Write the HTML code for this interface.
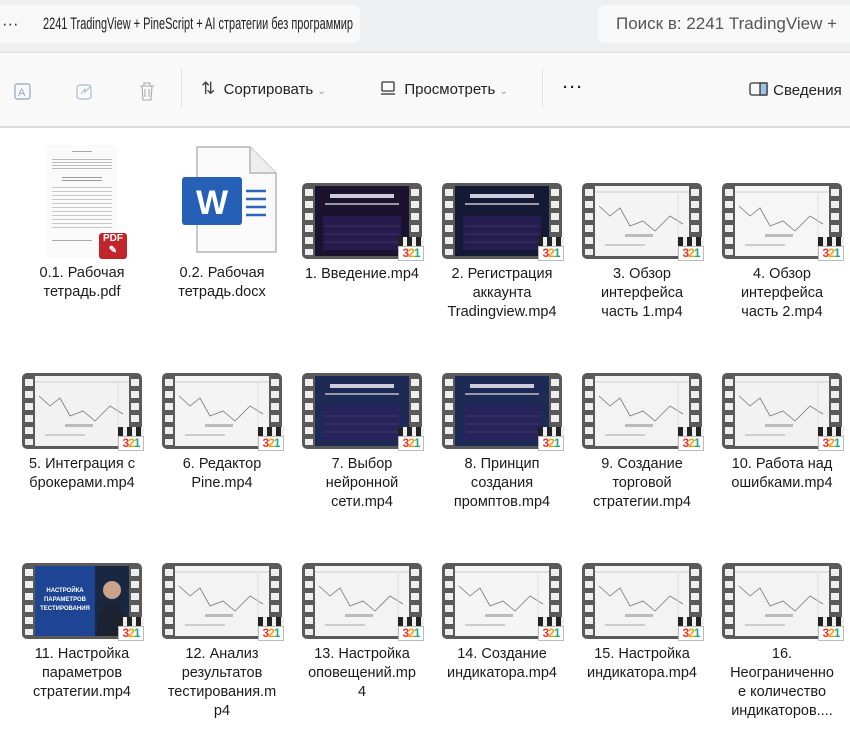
<!DOCTYPE html>
<html><head><meta charset="utf-8"><style>
body{margin:0;width:850px;height:732px;overflow:hidden;background:#fff;font-family:"Liberation Sans","DejaVu Sans",sans-serif;position:relative}
.top{position:absolute;left:0;top:0;width:850px;height:52px;background:#eeeff1;border-bottom:1px solid #e0e0e0}
.addr{position:absolute;left:-10px;top:5px;width:370px;height:38px;background:#f8f8f9;border-radius:6px;font-size:16.5px;color:#222;line-height:38px;white-space:nowrap;overflow:hidden}
.srch{position:absolute;left:598px;top:5px;width:270px;height:38px;background:#f8f8f9;border-radius:6px;font-size:17px;color:#555;line-height:38px;padding-left:18px;white-space:nowrap}
.tb{position:absolute;left:0;top:53px;width:850px;height:73px;background:#f9f9f9;border-bottom:2px solid #dcdcdc}
.tb span{position:absolute;top:28px;font-size:15px;color:#222;white-space:nowrap}
.sep{position:absolute;top:15px;width:1px;height:40px;background:#e3e3e3}
.it{position:absolute;width:140px;text-align:center}
.lab{font-size:14.5px;line-height:19px;color:#1a1a1a;margin-top:6px}
.film{position:relative;width:120px;height:76px;margin:0 auto;background:#5a5a5a;border-radius:5px}
.film .in{position:absolute;left:13px;top:3px;width:94px;height:70px;overflow:hidden}
.holes{position:absolute;top:6px;width:8px;height:66px;background:repeating-linear-gradient(#eee 0 7px,transparent 7px 12px)}
.badge{position:absolute;right:-2px;bottom:-2px;width:26px;height:24px}
.badge .c{position:absolute;left:0;top:0;width:26px;height:9px;background:repeating-linear-gradient(90deg,#222 0 5px,#eee 5px 9px)}
.badge .n{position:absolute;left:0;top:9px;width:26px;height:15px;background:#fff;border:1px solid #bbb;box-sizing:border-box;font:bold 12px/13px "Liberation Sans";letter-spacing:-1px;text-align:center}
.line{position:absolute;height:1px;background:#aaa}
.cond{position:absolute;left:53px;top:0;transform:scaleX(.665);transform-origin:left center}
</style></head><body>
<div class="top">
 <div class="addr"><span style="margin-left:12px;color:#333">···</span><span class="cond">2241 TradingView + PineScript + AI стратегии без программир</span></div>
 <div class="srch">Поиск в: 2241 TradingView +</div>
</div>
<div class="tb">
 <span style="left:12px">
  <svg width="22" height="20"><rect x="3" y="3" width="15" height="15" rx="2" fill="none" stroke="#8fa8c8" stroke-width="1.2"/><text x="6" y="15" font-size="11" fill="#8fa8c8">A</text></svg></span>
 <span style="left:74px"><svg width="22" height="20"><rect x="3" y="4" width="14" height="14" rx="3" fill="none" stroke="#a9bcd6" stroke-width="1.2"/><path d="M7 13 L11 8 L11 11 L16 6" stroke="#a9bcd6" fill="none"/></svg></span>
 <span style="left:136px"><svg width="22" height="20"><path d="M4 5 H18 M8 5 V2 H14 V5 M6 5 L7 19 H15 L16 5 M9 8 V16 M13 8 V16" stroke="#aaa" fill="none" stroke-width="1.1"/></svg></span>
 <div class="sep" style="left:181px"></div>
 <span style="left:201px;top:26px"><span style="position:static;font-size:17px;color:#444">⇅</span>&nbsp; Сортировать <span style="position:static;color:#999;font-size:10px">⌄</span></span>
 <span style="left:380px;top:28px"><svg width="16" height="14" style="vertical-align:-1px"><rect x="2" y="1" width="12" height="9" rx="1" fill="none" stroke="#333" stroke-width="1.3"/><path d="M1 13 H15" stroke="#333" stroke-width="1.3"/></svg>&nbsp; Просмотреть <span style="position:static;color:#999;font-size:10px">⌄</span></span>
 <div class="sep" style="left:542px"></div>
 <span style="left:563px;font-weight:bold;letter-spacing:2px;top:26px">···</span>
 <span style="left:749px"><svg width="20" height="16" style="vertical-align:-2px"><rect x="1" y="2" width="17" height="12" rx="2" fill="none" stroke="#333" stroke-width="1.3"/><rect x="11" y="2" width="7" height="12" fill="#9cc3e8" stroke="#333" stroke-width="1.3"/></svg>&nbsp;Сведения</span>
</div>

<div class="it" style="left:12px;top:145px">
 <div style="position:relative;width:70px;height:113px;margin:0 auto;background:#fafafa">
  <div class="line" style="left:25px;top:6px;width:20px"></div>
  <div class="line" style="left:5px;top:14px;width:60px;height:10px;background:repeating-linear-gradient(#bbb 0 1px,transparent 1px 3px)"></div>
  <div class="line" style="left:15px;top:32px;width:40px;height:6px;background:repeating-linear-gradient(#999 0 1px,transparent 1px 3px)"></div>
  <div class="line" style="left:5px;top:42px;width:60px;height:42px;background:repeating-linear-gradient(#c8c8c8 0 1px,transparent 1px 4px)"></div>
  <div class="line" style="left:5px;top:95px;width:40px"></div>
  <div style="position:absolute;left:52px;top:88px;width:28px;height:26px;background:#c0252a;border-radius:3px;color:#fff;font:bold 10px/12px 'Liberation Sans';text-align:center">PDF<br>✎</div>
 </div>
 <div class="lab">0.1. Рабочая<br>тетрадь.pdf</div>
</div>
<div class="it" style="left:152px;top:145px">
 <div style="position:relative;width:113px;height:113px;margin:0 auto">
  <svg width="113" height="113"><path d="M31 2 H84 L110 28 V107 H31 Z" fill="#fafafa" stroke="#b5b5b5" stroke-width="1.5"/><path d="M84 2 V28 H110" fill="#eee" stroke="#b5b5b5" stroke-width="1.5"/><path d="M80 46 H100 M80 54 H100 M80 62 H100 M80 70 H100" stroke="#2b66b8" stroke-width="2.5"/><rect x="16" y="32" width="60" height="48" rx="3" fill="#2660b6"/><text x="46" y="69" font-size="34" font-weight="bold" fill="#fff" text-anchor="middle" font-family="Liberation Sans">W</text></svg>
 </div>
 <div class="lab">0.2. Рабочая<br>тетрадь.docx</div>
</div>

<div id="vids"></div>
<script>
const V=[
[292,183,'#1b1230','1. Введение.mp4','d'],
[432,183,'#141a35','2. Регистрация<br>аккаунта<br>Tradingview.mp4','d'],
[572,183,'#f4f4f4','3. Обзор<br>интерфейса<br>часть 1.mp4','w'],
[712,183,'#f6f6f6','4. Обзор<br>интерфейса<br>часть 2.mp4','w'],
[12,373,'#f2f2f2','5. Интеграция с<br>брокерами.mp4','w'],
[152,373,'#f4f4f4','6. Редактор<br>Pine.mp4','w'],
[292,373,'#1d2a55','7. Выбор<br>нейронной<br>сети.mp4','d'],
[432,373,'#1c2a55','8. Принцип<br>создания<br>промптов.mp4','d'],
[572,373,'#f3f3f3','9. Создание<br>торговой<br>стратегии.mp4','w'],
[712,373,'#f2f2f2','10. Работа над<br>ошибками.mp4','w'],
[12,563,'#1e4494','11. Настройка<br>параметров<br>стратегии.mp4','p'],
[152,563,'#f3f3f3','12. Анализ<br>результатов<br>тестирования.m<br>p4','w'],
[292,563,'#f3f3f3','13. Настройка<br>оповещений.mp<br>4','w'],
[432,563,'#f5f5f5','14. Создание<br>индикатора.mp4','w'],
[572,563,'#f3f3f3','15. Настройка<br>индикатора.mp4','w'],
[712,563,'#f3f3f3','16.<br>Неограниченно<br>е количество<br>индикаторов....','w']];
let h='';
for(const [x,y,c,t,k] of V){
 let inner='';
 if(k=='w') inner='<svg width="94" height="70"><path d="M4 20 L15 30 L25 22 L35 40 L48 35 L60 45 L75 30 L88 38" stroke="#777" fill="none" stroke-width="0.8"/><path d="M0 6 H94" stroke="#ccc"/><path d="M83 6 V70" stroke="#ddd"/><rect x="30" y="48" width="28" height="3" fill="#bbb"/><rect x="10" y="58" width="40" height="2" fill="#ccc"/></svg>';
 else if(k=='d') inner='<svg width="94" height="70"><rect x="15" y="8" width="64" height="4" fill="#ccd"/><rect x="10" y="17" width="74" height="2" fill="#99a"/><rect x="8" y="30" width="78" height="34" fill="#302060" opacity=".6"/><path d="M10 40 H84 M10 48 H84 M10 56 H84" stroke="#556" stroke-width="0.6"/></svg>';
 else inner='<svg width="94" height="70"><rect x="60" y="0" width="34" height="70" fill="#1a2740"/><circle cx="77" cy="24" r="9" fill="#c9a48a"/><path d="M62 70 Q64 36 77 36 Q90 36 92 70Z" fill="#1b2232"/><text x="30" y="26" font-size="6" fill="#fff" text-anchor="middle" font-weight="bold">НАСТРОЙКА</text><text x="30" y="35" font-size="6" fill="#fff" text-anchor="middle" font-weight="bold">ПАРАМЕТРОВ</text><text x="30" y="44" font-size="6" fill="#fff" text-anchor="middle" font-weight="bold">ТЕСТИРОВАНИЯ</text></svg>';
 h+=`<div class="it" style="left:${x}px;top:${y}px"><div class="film"><div class="holes" style="left:3px"></div><div class="holes" style="right:3px"></div><div class="in" style="background:${c}">${inner}</div><div class="badge"><div class="c"></div><div class="n"><span style="color:#e33">3</span><span style="color:#f90">2</span><span style="color:#2a8">1</span></div></div></div><div class="lab">${t}</div></div>`;
}
document.getElementById('vids').innerHTML=h;
</script>
</body></html>
